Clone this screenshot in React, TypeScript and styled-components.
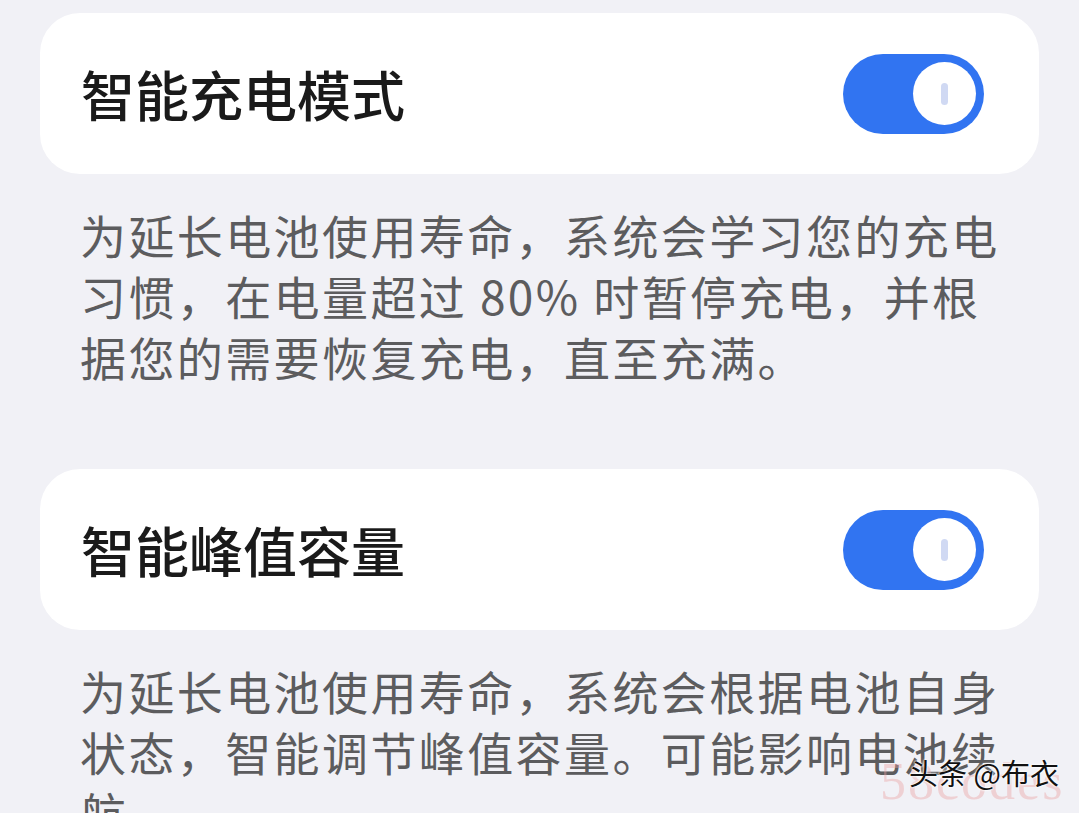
import styled, { createGlobalStyle } from 'styled-components'

const GlobalStyle = createGlobalStyle`
  html, body {
    margin: 0;
    background: #f1f1f6;
  }
  body {
    font-family: 'Noto Sans CJK SC', 'Noto Sans', sans-serif;
  }
`

const settings = [
  {
    title: '智能充电模式',
    note: '为延长电池使用寿命，系统会学习您的充电习惯，在电量超过 80% 时暂停充电，并根据您的需要恢复充电，直至充满。',
  },
  {
    title: '智能峰值容量',
    note: '为延长电池使用寿命，系统会根据电池自身状态，智能调节峰值容量。可能影响电池续航。',
  },
]

function Toggle() {
  return (
    <Track>
      <Knob>
        <KnobMark />
      </Knob>
    </Track>
  )
}

function App() {
  return (
    <>
      <GlobalStyle />
      <Page>
        {settings.map((s) => (
          <Section key={s.title}>
            <Card>
              <Title>{s.title}</Title>
              <Toggle />
            </Card>
            <Note>{s.note}</Note>
          </Section>
        ))}
        <Watermark>
          <WatermarkBrand>58codes</WatermarkBrand>
          <WatermarkText>头条 @布衣</WatermarkText>
        </Watermark>
      </Page>
    </>
  )
}

export default App

const Page = styled.div`
  position: relative;
  height: 813px;
  overflow: hidden;
  padding: 13px 40px 0;
  box-sizing: border-box;
  display: flex;
  flex-direction: column;
  gap: 82px;
`

const Section = styled.section`
  display: flex;
  flex-direction: column;
`

const Card = styled.div`
  height: 161px;
  background: #fff;
  border-radius: 40px;
  display: flex;
  align-items: center;
  justify-content: space-between;
  padding: 0 55px 0 41px;
`

const Title = styled.h2`
  margin: 0;
  font-size: 54px;
  font-weight: 500;
  color: #1a1a1a;
  line-height: 1;
`

const Track = styled.div`
  width: 141px;
  height: 80px;
  border-radius: 40px;
  background: #3174f1;
  box-sizing: border-box;
  padding: 0 8px;
  display: flex;
  align-items: center;
  justify-content: flex-end;
`

const Knob = styled.div`
  width: 63px;
  height: 63px;
  border-radius: 50%;
  background: #fff;
  display: flex;
  align-items: center;
  justify-content: center;
`

const KnobMark = styled.div`
  width: 7px;
  height: 22px;
  border-radius: 4px;
  background: #d0d9f3;
`

const Note = styled.p`
  margin: 0;
  padding: 30px 38px 0 40px;
  font-size: 46px;
  letter-spacing: 2.4px;
  line-height: 61px;
  color: #5c5c5e;
`

const Watermark = styled.div`
  position: absolute;
  left: 880px;
  top: 756px;
  width: 190px;
  height: 50px;
`

const WatermarkBrand = styled.div`
  position: absolute;
  left: 0;
  top: 0;
  font-family: 'Liberation Serif', serif;
  font-size: 52px;
  line-height: 1;
  color: rgba(236, 160, 160, 0.4);
  letter-spacing: 2px;
`

const WatermarkText = styled.div`
  position: absolute;
  left: 29px;
  top: 2px;
  font-size: 29px;
  line-height: 1;
  color: #111;
  white-space: nowrap;
  text-shadow: 0 0 2px #fff, 0 0 2px #fff, 0 0 3px #fff;
`
